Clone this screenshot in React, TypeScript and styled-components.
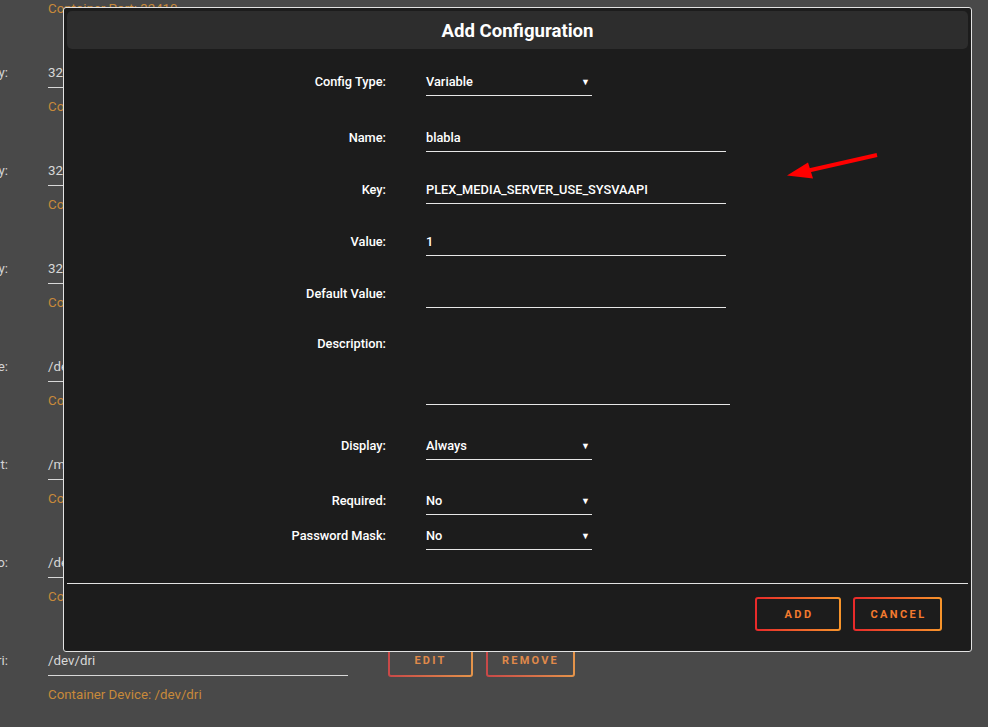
import React from "react";
import styled, { createGlobalStyle } from "styled-components";

const Global = createGlobalStyle`
  html, body { margin: 0; padding: 0; }
  body {
    background: #494949;
    font-family: Roboto, "Liberation Sans", sans-serif;
    overflow: hidden;
    width: 988px;
    height: 727px;
  }
`;

const Page = styled.div`
  position: relative;
  width: 988px;
  height: 727px;
  overflow: hidden;
  padding-top: 1px;
  box-sizing: border-box;
`;

const Block = styled.div`
  display: flex;
  flex-direction: column;
`;

const BgRow = styled.div`
  display: flex;
  align-items: center;
  height: 31px;
  margin-top: 40px;
`;

const BgLabel = styled.div`
  width: 8px;
  display: flex;
  justify-content: flex-end;
  white-space: nowrap;
  color: #d4d4d4;
  font-size: 13.3px;
`;

const BgValue = styled.div`
  margin-left: 40px;
  width: 300px;
  height: 31px;
  box-sizing: border-box;
  border-bottom: 1px solid #d8d8d8;
  display: flex;
  align-items: center;
  color: #d8d8d8;
  font-size: 13.3px;
`;

const BgButtons = styled.div`
  display: flex;
  gap: 13px;
  margin-left: 40px;
`;

const BgButton = styled.div`
  height: 33px;
  box-sizing: border-box;
  padding: 0 14px;
  min-width: 85px;
  display: flex;
  align-items: center;
  justify-content: center;
  border: 2px solid transparent;
  border-radius: 3px;
  background: linear-gradient(#494949, #494949) padding-box,
    linear-gradient(90deg, #c84848, #e4944a) border-box;
  color: #e08a4a;
  font-size: 11px;
  font-weight: 700;
  letter-spacing: 2.2px;
`;

const BgDesc = styled.div<{ $first?: boolean }>`
  margin-left: 48px;
  margin-top: ${(p) => (p.$first ? "0" : "11px")};
  line-height: 16px;
  height: 16px;
  color: #c88a3a;
  font-size: 13.3px;
  white-space: nowrap;
`;

const Modal = styled.div`
  position: absolute;
  left: 63px;
  top: 7px;
  width: 909px;
  height: 645px;
  box-sizing: border-box;
  border: 1px solid #e2e2e2;
  border-radius: 3px;
  background: #1c1c1c;
  padding: 3px;
  display: flex;
  flex-direction: column;
`;

const Header = styled.div`
  height: 38px;
  padding-top: 1px;
  box-sizing: border-box;
  background: #2d2d2d;
  border-radius: 5px;
  display: flex;
  align-items: center;
  justify-content: center;
  color: #fff;
  font-size: 18.6px;
  font-weight: 700;
`;

const Form = styled.div`
  display: flex;
  flex-direction: column;
`;

const FormRow = styled.div<{ $gap: number; $top?: boolean }>`
  display: grid;
  grid-template-columns: 319px 1fr;
  column-gap: 40px;
  align-items: ${(p) => (p.$top ? "start" : "center")};
  margin-top: ${(p) => p.$gap}px;
`;

const Label = styled.div`
  text-align: right;
  color: #fff;
  font-size: 12.8px;
  font-weight: 500;
  line-height: 28px;
`;

const Field = styled.div<{ $w: number; $h?: number }>`
  width: ${(p) => p.$w}px;
  height: ${(p) => p.$h ?? 29}px;
  box-sizing: border-box;
  border-bottom: 1px solid #e6e6e6;
  padding-top: 1px;
  display: flex;
  align-items: center;
  justify-content: space-between;
  color: #fff;
  font-size: 12.8px;
  font-weight: 500;
`;

const Caret = styled.span`
  font-size: 9px;
  margin-right: 2px;
  color: #fff;
`;

const Separator = styled.div`
  height: 1px;
  background: #e2e2e2;
  margin-top: 33px;
`;

const Footer = styled.div`
  display: flex;
  justify-content: flex-end;
  gap: 12px;
  padding: 13px 26px 0 0;
`;

const Button = styled.button<{ $w: number }>`
  width: ${(p) => p.$w}px;
  height: 34px;
  box-sizing: border-box;
  border: 2px solid transparent;
  border-radius: 3px;
  background: linear-gradient(#1c1c1c, #1c1c1c) padding-box,
    linear-gradient(90deg, #e8292a, #f7952b) border-box;
  color: #f47a2e;
  font-family: Roboto, "Liberation Sans", sans-serif;
  font-size: 11px;
  font-weight: 700;
  letter-spacing: 2.4px;
  padding: 0 0 0 2px;
  cursor: pointer;
`;

const Arrow = styled.svg`
  position: absolute;
  left: 0;
  top: 0;
  pointer-events: none;
`;

const bgRows = [
  { label: "Key 1 Key:", value: "32400", desc: "Container Port: 32400" },
  { label: "Key 2 Key:", value: "32469", desc: "Container Port: 32469" },
  { label: "Key 3 Key:", value: "32410", desc: "Container Port: 32410" },
  { label: "Device:", value: "/dev/dvb", desc: "Container Device: /dev/dvb" },
  { label: "Host Mount:", value: "/mnt/user", desc: "Container Path: /mnt/user" },
  { label: "Transcode Dev Info:", value: "/dev/sdo", desc: "Container Device: /dev/sdo" },
  { label: "Dri:", value: "/dev/dri", desc: "Container Device: /dev/dri" },
];

type F = {
  label: string;
  value?: string;
  select?: boolean;
  w: number;
  gap: number;
  h?: number;
  top?: boolean;
};

const fields: F[] = [
  { label: "Config Type:", value: "Variable", select: true, w: 166, gap: 18 },
  { label: "Name:", value: "blabla", w: 300, gap: 27 },
  { label: "Key:", value: "PLEX_MEDIA_SERVER_USE_SYSVAAPI", w: 300, gap: 23 },
  { label: "Value:", value: "1", w: 300, gap: 23 },
  { label: "Default Value:", value: "", w: 300, gap: 23 },
  { label: "Description:", value: "", w: 304, gap: 22, h: 75, top: true },
  { label: "Display:", value: "Always", select: true, w: 166, gap: 26 },
  { label: "Required:", value: "No", select: true, w: 166, gap: 26 },
  { label: "Password Mask:", value: "No", select: true, w: 166, gap: 6 },
];

export default function App() {
  return (
    <>
      <Global />
      <Page>
        <BgDesc $first>Container Port: 32410</BgDesc>
        {bgRows.map((r, i) => (
          <Block key={i}>
            <BgRow>
              <BgLabel>{r.label}</BgLabel>
              <BgValue>{r.value}</BgValue>
              <BgButtons>
                <BgButton>EDIT</BgButton>
                <BgButton>REMOVE</BgButton>
              </BgButtons>
            </BgRow>
            <BgDesc>{r.desc}</BgDesc>
          </Block>
        ))}

        <Modal>
          <Header>Add Configuration</Header>
          <Form>
            {fields.map((f) => (
              <FormRow key={f.label} $gap={f.gap} $top={f.top}>
                <Label>{f.label}</Label>
                <Field $w={f.w} $h={f.h}>
                  <span>{f.value}</span>
                  {f.select && <Caret>▼</Caret>}
                </Field>
              </FormRow>
            ))}
          </Form>
          <Separator />
          <Footer>
            <Button $w={86}>ADD</Button>
            <Button $w={89}>CANCEL</Button>
          </Footer>
        </Modal>

        <Arrow width="988" height="727" viewBox="0 0 988 727">
          <line x1="877" y1="155" x2="802" y2="172" stroke="#ff0000" strokeWidth="4" />
          <polygon points="787,175.5 808,162.5 813,178.5" fill="#ff0000" />
        </Arrow>
      </Page>
    </>
  );
}
